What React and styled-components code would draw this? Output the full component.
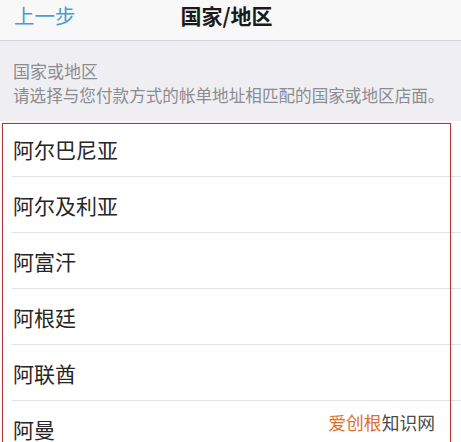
import React from 'react';
import styled, { createGlobalStyle } from 'styled-components';

const GlobalStyle = createGlobalStyle`
html, body {
  margin: 0;
  padding: 0;
  background: #ffffff;
}
body {
  font-family: "Noto Sans CJK SC", "Noto Sans", sans-serif;
  -webkit-font-smoothing: antialiased;
}`

const Page = styled.div`
position: relative;
width: 461px;
height: 442px;
overflow: hidden;
background: #ffffff;`

const NavBar = styled.header`
height: 41px;
background: #f8f8f9;
border-bottom: 1px solid #d6d6da;
display: grid;
grid-template-columns: 1fr auto 1fr;
align-items: start;
padding: 3px 22px 0 14px;
box-sizing: border-box;`

const BackButton = styled.span`
justify-self: start;
font-size: 20.5px;
line-height: 24px;
color: #4a9ccc;`

const NavTitle = styled.h1`
margin: 0;
font-size: 21px;
line-height: 24px;
font-weight: 700;
color: #1a1a1a;`

const SectionHeader = styled.section`
background: #efeff3;
padding: 20px 13px 16px 13px;
display: flex;
flex-direction: column;
gap: 4px;`

const SectionTitle = styled.div`
font-size: 17px;
line-height: 20px;
color: #8b8b90;`

const SectionNote = styled.div`
font-size: 16.6px;
line-height: 20px;
color: #8b8b90;
white-space: nowrap;`

const List = styled.ul`
position: relative;
list-style: none;
margin: 0;
padding: 0;
background: #ffffff;`

const Row = styled.li`
height: 55px;
margin-left: 12px;
padding-left: 1px;
display: flex;
align-items: center;
font-size: 21px;
color: #262626;
border-bottom: 1px solid #e3e3e6;
&:last-child {
  border-bottom: none;
}`

const Frame = styled.div`
position: absolute;
left: 2px;
top: 2px;
width: 449px;
height: 400px;
border: 1.5px solid #b0373a;
box-shadow: 0 0 2px rgba(230, 120, 120, 0.45);
box-sizing: border-box;
pointer-events: none;`

const Watermark = styled.div`
position: absolute;
right: 26px;
top: 411px;
font-size: 17.8px;
line-height: 22px;
color: #4a4a4a;`

const Brand = styled.span`
color: #e0702e;`

const countries = ['阿尔巴尼亚', '阿尔及利亚', '阿富汗', '阿根廷', '阿联酋', '阿曼'];

const App = () => {
  return (
    <Page>
      <GlobalStyle />
      <NavBar>
        <BackButton>上一步</BackButton>
        <NavTitle>国家/地区</NavTitle>
      </NavBar>
      <SectionHeader>
        <SectionTitle>国家或地区</SectionTitle>
        <SectionNote>请选择与您付款方式的帐单地址相匹配的国家或地区店面。</SectionNote>
      </SectionHeader>
      <List>
        {countries.map((name) => (
          <Row key={name}>{name}</Row>
        ))}
        <Frame />
      </List>
      <Watermark><Brand>爱创根</Brand>知识网</Watermark>
    </Page>
  );
};

export default App;
